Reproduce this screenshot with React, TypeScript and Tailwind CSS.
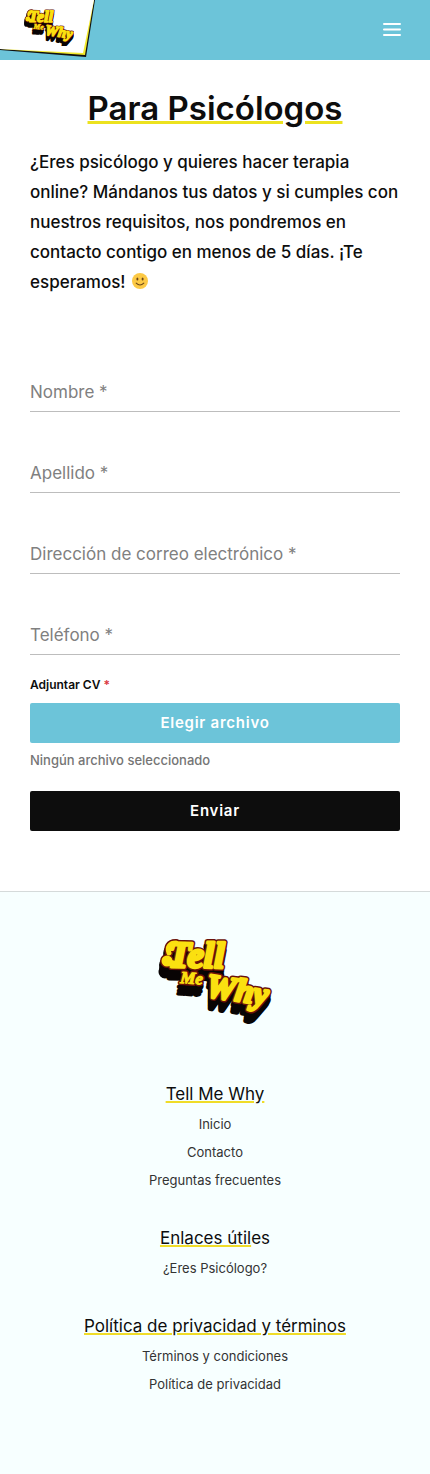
import { useRef, useState } from "react";

type LinkGroup = { title: string; plain?: string; links: string[] };

const fields = [
  { id: "nombre", label: "Nombre *", type: "text" },
  { id: "apellido", label: "Apellido *", type: "text" },
  { id: "correo", label: "Dirección de correo electrónico *", type: "email" },
  { id: "telefono", label: "Teléfono *", type: "tel" },
];

const groups: LinkGroup[] = [
  { title: "Tell Me Why", links: ["Inicio", "Contacto", "Preguntas frecuentes"] },
  { title: "Enlaces útil", plain: "es", links: ["¿Eres Psicólogo?"] },
  { title: "Política de privacidad y términos", links: ["Términos y condiciones", "Política de privacidad"] },
];

const lettering = [
  { text: "Tell", x: 9, y: 31, size: 37, angle: 1 },
  { text: "Why", x: 46, y: 60, size: 33, angle: 9 },
  { text: "Me", x: 21, y: 47, size: 17, angle: 4 },
];

const layers = [
  { dx: -2, dy: 11, color: "#080404", grow: 5 },
  { dx: -1, dy: 8, color: "#080404", grow: 6 },
  { dx: -1, dy: 4, color: "#080404", grow: 6 },
  { dx: 0, dy: 0, color: "#6b1208", grow: 6 },
  { dx: 0, dy: 0, color: "#fbe010", grow: 3 },
];

function Logo({ className }: { className: string }) {
  return (
    <svg viewBox="0 0 112 86" className={className} role="img" aria-label="Tell Me Why">
      {layers.map((layer, i) => (
        <g
          key={i}
          transform={`translate(${layer.dx} ${layer.dy})`}
          fill={layer.color}
          stroke={layer.color}
          strokeLinejoin="round"
          strokeLinecap="round"
          aria-hidden={i < layers.length - 1}
        >
          <path d="M17 7C10 7 8 12 10 17" fill="none" strokeWidth={layer.grow + 2} />
          <circle cx="8" cy="25" r="4" strokeWidth={layer.grow} />
          <path d="M8 26L16 28" fill="none" strokeWidth={layer.grow + 3} />
          {lettering.map((word) => (
            <text
              key={word.text}
              transform={`translate(${word.x} ${word.y}) rotate(${word.angle})`}
              fontFamily="'Liberation Serif', serif"
              fontWeight="700"
              fontStyle="italic"
              fontSize={word.size}
              strokeWidth={word.text === "Me" ? layer.grow - 2 : layer.grow}
            >
              {word.text}
            </text>
          ))}
        </g>
      ))}
    </svg>
  );
}

function Smile() {
  return (
    <svg viewBox="0 0 16 16" className="ml-0.5 inline-block size-4 align-[-1px]" role="img" aria-label="Sonrisa">
      <circle cx="8" cy="8" r="8" fill="#fcc945" />
      <ellipse cx="5.4" cy="6" rx="1" ry="1.5" fill="#6b4518" />
      <ellipse cx="10.6" cy="6" rx="1" ry="1.5" fill="#6b4518" />
      <path d="M4.2 10.2Q8 13.8 11.8 10.2" fill="none" stroke="#6b4518" strokeWidth="1.1" strokeLinecap="round" />
    </svg>
  );
}

export default function App() {
  const fileInput = useRef<HTMLInputElement>(null);
  const [fileName, setFileName] = useState("Ningún archivo seleccionado");

  return (
    <div className="min-h-screen bg-white font-['Inter',sans-serif] text-[#0d0d0d]">
      <header className="flex h-15 items-start justify-between bg-[#6cc4d9]">
        <a href="#inicio" className="relative block h-15 w-24">
          <svg viewBox="0 0 96 60" className="absolute inset-0 h-15 w-24" aria-hidden="true">
            <path d="M0 0H95L86 57L0 50Z" fill="#111" />
            <path d="M0 0H94L85 55L0 49Z" fill="#f3ea2c" />
            <path d="M0 0H94L83 53L0 49Z" fill="#fff" />
          </svg>
          <Logo className="absolute top-2 left-6 h-[38px] w-[50px]" />
        </a>
        <button type="button" aria-label="Menú" className="mt-3 mr-5 flex size-9 items-center justify-center">
          <svg viewBox="0 0 20 14" className="h-3.5 w-5" aria-hidden="true">
            <path d="M2 1H18M2 6.5H18M2 12H18" stroke="#fff" strokeWidth="2" strokeLinecap="round" />
          </svg>
        </button>
      </header>

      <main className="px-[30px] pb-[60px]">
        <h1 className="pt-7 text-center text-[33px] leading-10 font-semibold underline decoration-[#ece21f] decoration-3 underline-offset-1">
          Para Psicólogos
        </h1>
        <p className="pt-[19px] text-[17px] leading-[30px] font-medium">
          ¿Eres psicólogo y quieres hacer terapia online? Mándanos tus datos y si cumples con nuestros requisitos, nos pondremos en contacto contigo en menos de 5 días. ¡Te esperamos! <Smile />
        </p>

        <form className="pt-[34px]" onSubmit={(e) => e.preventDefault()}>
          {fields.map((f) => (
            <div key={f.id} className="relative pt-10">
              <input id={f.id} type={f.type} placeholder=" " className="peer block h-[41px] w-full border-b border-[#bdbdbd] bg-transparent text-base outline-none" />
              <label htmlFor={f.id} className="pointer-events-none absolute bottom-2 left-0 text-[17px] leading-6 text-[#808080] peer-focus:bottom-8 peer-focus:text-xs peer-[:not(:placeholder-shown)]:bottom-8 peer-[:not(:placeholder-shown)]:text-xs">
                {f.label}
              </label>
            </div>
          ))}
          <label htmlFor="cv" className="mt-5 block text-xs leading-5 font-semibold">
            Adjuntar CV <span className="text-[#d9363e]">*</span>
          </label>
          <input ref={fileInput} id="cv" type="file" className="hidden" onChange={(e) => setFileName(e.target.files?.[0]?.name ?? "Ningún archivo seleccionado")} />
          <button type="button" onClick={() => fileInput.current?.click()} className="mt-2 h-10 w-full rounded-xs bg-[#6cc4d9] text-[15px] font-semibold tracking-wider text-white">
            Elegir archivo
          </button>
          <p className="mt-[7px] text-[13px] leading-5 font-medium text-[#757575]">{fileName}</p>
          <button type="submit" className="mt-[21px] h-10 w-full rounded-xs bg-[#0d0d0d] text-[15px] font-semibold tracking-wider text-white">
            Enviar
          </button>
        </form>
      </main>

      <footer className="flex flex-col items-center border-t border-[#d5dada] bg-[#f7ffff] px-5 pt-11 pb-[78px]">
        <Logo className="h-[86px] w-28 overflow-visible" />
        <div className="mt-14 flex flex-col gap-7 text-center">
          {groups.map((g) => (
            <section key={g.title}>
              <h2 className="text-[17px] leading-8">
                <span className="underline decoration-[#f0dc28] decoration-2 underline-offset-1">{g.title}</span>
                {g.plain}
              </h2>
              <ul>
                {g.links.map((l) => (
                  <li key={l} className="text-[13px] leading-7 text-[#333]">
                    <a href="#enlace">{l}</a>
                  </li>
                ))}
              </ul>
            </section>
          ))}
        </div>
      </footer>
    </div>
  );
}
